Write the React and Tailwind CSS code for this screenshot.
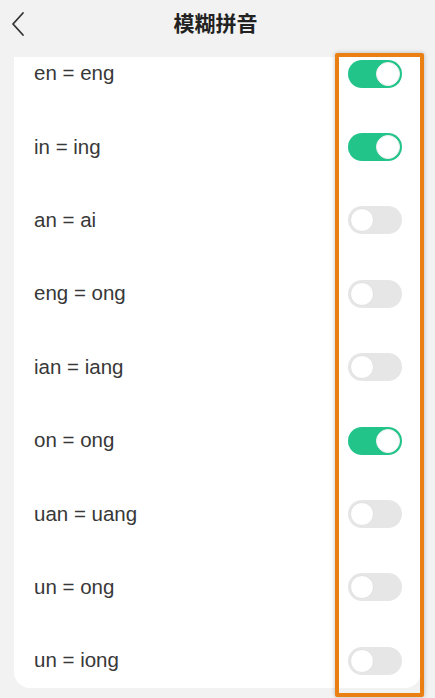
import { useState } from 'react';

const rows = [
    { label: 'en = eng', on: true },
    { label: 'in = ing', on: true },
    { label: 'an = ai', on: false },
    { label: 'eng = ong', on: false },
    { label: 'ian = iang', on: false },
    { label: 'on = ong', on: true },
    { label: 'uan = uang', on: false },
    { label: 'un = ong', on: false },
    { label: 'un = iong', on: false },
];

function Toggle({ on, onClick }) {
    return (
        <button
            onClick={onClick}
            className={`relative w-[54px] h-[28px] rounded-full shrink-0 ${on ? 'bg-[#22c48a]' : 'bg-[#e6e6e6]'}`}
        >
            <span
                className={`absolute top-[2px] w-[24px] h-[24px] rounded-full bg-white border ${on ? 'right-[2px] border-[#f0f0f0]' : 'left-[2px] border-[#e0e0e0]'}`}
            />
        </button>
    );
}

export default function App() {
    const [items, setItems] = useState(rows);

    const flip = (index) => {
        setItems(prev => prev.map((r, i) => (i === index ? { ...r, on: !r.on } : r)));
    };

    return (
        <div className="relative w-[435px] h-[698px] bg-[#f2f2f2] overflow-hidden flex flex-col" style={{ fontFamily: '"Liberation Sans", "Noto Sans CJK SC", sans-serif' }}>
            {/* Header */}
            <div className="relative h-[57px] shrink-0 flex items-start justify-center pt-[9px]">
                <button className="absolute left-[10px] top-[11px]">
                    <svg width="18" height="26" viewBox="0 0 18 26" fill="none" stroke="#333" strokeWidth="1.8" strokeLinecap="round" strokeLinejoin="round">
                        <path d="M13 2 L3 13 L13 24" />
                    </svg>
                </button>
                <h1 className="text-[21px] font-bold text-[#222] leading-[30px] -ml-[4px]">模糊拼音</h1>
            </div>

            {/* List card */}
            <div className="ml-[14px] mr-[14px] h-[631px] bg-white rounded-b-2xl overflow-hidden">
                <div className="-mt-[20px]">
                    {items.map((row, i) => (
                        <div key={i} className="h-[73.4px] flex items-center justify-between pl-[20px] pr-[19px]">
                            <span className="text-[20.5px] text-[#383838]">{row.label}</span>
                            <Toggle on={row.on} onClick={() => flip(i)} />
                        </div>
                    ))}
                </div>
            </div>

            {/* Highlight box over the toggle column */}
            <div className="absolute left-[335px] top-[53px] w-[89px] h-[644px] border-[4px] border-[#ea7f14] rounded-[2px] pointer-events-none shadow-[0_0_4px_rgba(0,0,0,0.25)]" />
        </div>
    );
}
